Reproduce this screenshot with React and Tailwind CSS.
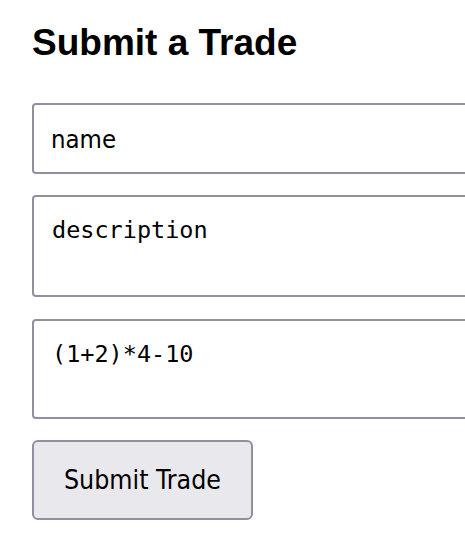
export default function App() {
  return (
    <div className="min-h-screen bg-white pl-[32px] pt-[22px] overflow-hidden">
      <h2 className="text-[37px] font-bold leading-[41px] text-black [font-family:'Liberation_Sans',Arial,sans-serif]">
        Submit a Trade
      </h2>

      <form className="mt-[40px] flex flex-col">
        <input
          type="text"
          defaultValue="name"
          className="w-[520px] h-[71px] px-[17px] border-2 border-[#8f8f9d] rounded-[4px] text-[25.5px] text-black bg-white outline-none [font-stretch:semi-condensed] [font-family:'DejaVu_Sans',sans-serif]"
        />
        <textarea
          defaultValue="description"
          className="mt-[21px] w-[520px] h-[102px] px-[18px] pt-[20px] border-2 border-[#8f8f9d] rounded-[4px] text-[23.5px] leading-[27px] text-black bg-white resize-none outline-none [font-family:'DejaVu_Sans_Mono',monospace]"
        />
        <textarea
          defaultValue="(1+2)*4-10"
          className="mt-[22px] w-[520px] h-[100px] px-[18px] pt-[20px] border-2 border-[#8f8f9d] rounded-[4px] text-[23.5px] leading-[27px] text-black bg-white resize-none outline-none [font-family:'DejaVu_Sans_Mono',monospace]"
        />
        <div className="mt-[21px]">
          <button
            type="button"
            className="w-[221px] h-[80px] border-2 border-[#8f8f9d] rounded-[6px] bg-[#e9e9ed] text-[26.5px] text-black [font-stretch:semi-condensed] [font-family:'DejaVu_Sans',sans-serif]"
          >
            Submit Trade
          </button>
        </div>
      </form>
    </div>
  );
}
